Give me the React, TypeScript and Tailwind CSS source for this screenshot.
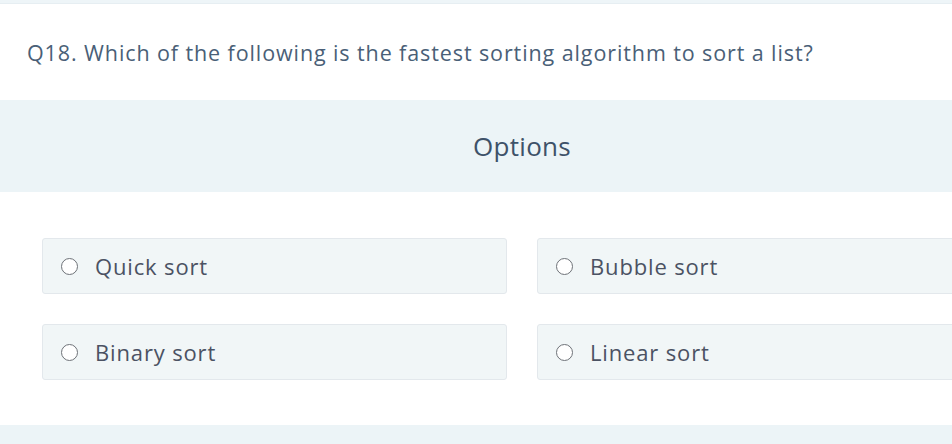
import React from "react";

const options = [
  ["Quick sort", "Bubble sort"],
  ["Binary sort", "Linear sort"],
];

function Option({ label }: { label: string }) {
  return (
    <div className="flex h-[56px] w-[465px] shrink-0 items-center rounded-[3px] border border-[#e3e8ec] bg-[#f1f6f7] pl-[18px]">
      <span className="box-border h-[17px] w-[17px] shrink-0 rounded-full border-[1.5px] border-[#6e7278] bg-white" />
      <span className="ml-[17px] text-[22px] leading-none tracking-[0.85px] text-[#4b5263]">{label}</span>
    </div>
  );
}

export default function App() {
  return (
    <div
      className="relative h-[444px] w-[952px] overflow-hidden bg-white"
      style={{ fontFamily: "'Open Sans', 'Noto Sans', sans-serif" }}
    >
      <div className="h-[4px] w-full border-b border-[#e6eef2] bg-[#eef5f8]" />
      <div className="pl-[27px] pt-[34px] pb-[32px]">
        <p className="text-[21.5px] leading-[30px] tracking-[0.9px] text-[#4a5f77]">
          Q18. Which of the following is the fastest sorting algorithm to sort a list?
        </p>
      </div>
      <div className="flex h-[92px] items-center justify-center bg-[#ecf4f7] pl-[92px]">
        <span className="text-[26px] tracking-[0.3px] text-[#3e5269]">Options</span>
      </div>
      <div className="flex w-[1100px] flex-col gap-[30px] pl-[42px] pt-[46px]">
        {options.map((row, i) => (
          <div key={i} className="flex gap-[30px]">
            {row.map((l) => (
              <Option key={l} label={l} />
            ))}
          </div>
        ))}
      </div>
      <div className="absolute bottom-0 left-0 h-[19px] w-full bg-[#ecf4f7]" />
    </div>
  );
}
